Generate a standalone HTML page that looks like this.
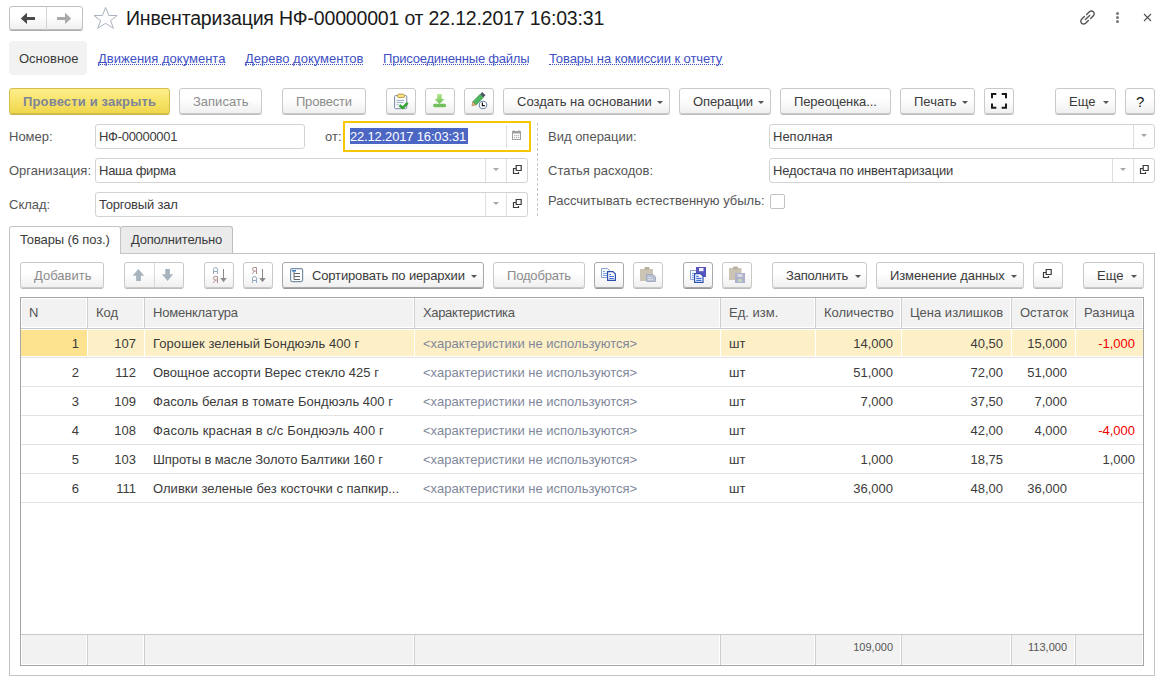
<!DOCTYPE html>
<html><head><meta charset="utf-8"><style>
*{box-sizing:border-box;margin:0;padding:0}
html,body{width:1162px;height:679px;overflow:hidden;background:#fff}
body{position:relative;font-family:"Liberation Sans",sans-serif;font-size:13px;color:#3b3b3b}
div,span,svg{position:absolute}
.t{white-space:nowrap;line-height:15px;height:15px}
.btn{height:26px;border:1px solid #c9c9c9;border-radius:3px;background:linear-gradient(#fff 0%,#fff 40%,#f0f0f0 100%);box-shadow:0 1px 0 #bdbdbd}
.en{border-color:#a9a9a9;box-shadow:0 1px 0 #9a9a9a}
.car{width:0;height:0;border-left:3px solid transparent;border-right:3px solid transparent;border-top:3px solid #555}
.fld{height:25px;border:1px solid #d3d3d3;border-radius:3px;background:#fff}
.dv{width:1px;background:#dedede}
.lnk{color:#3e50c4}
.ul{height:1px;border-top:1px dotted #3e50c4}
.lb{color:#555}
.dis{color:#8c8c8c}
.gr{color:#80879b}
.red{color:#f20000}
.r{text-align:right}
</style></head><body>
<div class="btn" style="left:9px;top:6px;width:74px;height:24px;box-shadow:0 1px 0 #aaa;border-color:#bfbfbf"></div>
<div style="left:46px;top:7px;width:1px;height:23px;background:#d4d4d4"></div>
<svg style="left:0;top:0" width="140" height="40" viewBox="0 0 140 40"><path d="M20.8 18.4 L27 12.8 V17 H35 V20 H27 V23.9 Z" fill="#4a4a4a"/><path d="M71.2 18.4 L65 12.8 V17 H57 V20 H65 V23.9 Z" fill="#a9a9a9"/><path d="M105.6 7.4 L108.8 15.5 L117.2 15.5 L110.6 20.6 L113.4 28.3 L105.6 23.3 L97.8 28.3 L100.6 20.6 L94 15.5 L102.4 15.5 Z" fill="none" stroke="#a9b2be" stroke-width="1" stroke-linejoin="miter"/></svg>
<div class="t" style="left:126px;top:8px;font-size:19.5px;line-height:21px;height:21px;color:#1a1a1a;letter-spacing:-0.18px">Инвентаризация НФ-00000001 от 22.12.2017 16:03:31</div>
<svg style="left:1079px;top:9px" width="17" height="17" viewBox="0 0 17 17"><g fill="none" stroke="#555" stroke-width="1.4" stroke-linecap="round"><path d="M7.6 5.6 L10.4 2.8 A2.8 2.8 0 0 1 14.4 6.8 L11.6 9.6"/><path d="M9.4 11.4 L6.6 14.2 A2.8 2.8 0 0 1 2.6 10.2 L5.4 7.4"/><path d="M6.4 10.6 L10.6 6.4"/></g></svg>
<div style="left:1116px;top:12px;width:3px;height:3px;border-radius:50%;background:#777"></div>
<div style="left:1116px;top:16px;width:3px;height:3px;border-radius:50%;background:#777"></div>
<div style="left:1116px;top:20px;width:3px;height:3px;border-radius:50%;background:#777"></div>
<svg style="left:1143px;top:13px" width="9" height="9" viewBox="0 0 9 9"><path d="M1 1 L8 8 M8 1 L1 8" stroke="#505050" stroke-width="1.1"/></svg>
<div style="left:9px;top:41px;width:78px;height:34px;background:#f2f2f2;border-radius:4px"></div>
<div class="t " style="left:19px;top:51px;">Основное</div>
<div class="t lnk" style="left:98px;top:51px;letter-spacing:0px">Движения документа</div>
<div class="ul" style="left:98px;top:64px;width:127px"></div>
<div class="t lnk" style="left:245px;top:51px;letter-spacing:0px">Дерево документов</div>
<div class="ul" style="left:245px;top:64px;width:118px"></div>
<div class="t lnk" style="left:383px;top:51px;letter-spacing:-0.21px">Присоединенные файлы</div>
<div class="ul" style="left:383px;top:64px;width:145px"></div>
<div class="t lnk" style="left:549px;top:51px;letter-spacing:-0.07px">Товары на комиссии к отчету</div>
<div class="ul" style="left:549px;top:64px;width:174px"></div>
<div class="btn" style="left:9px;top:88px;width:161px;border-color:#d6bf48;background:linear-gradient(#fdee8c,#f7e46a 50%,#efd64e);box-shadow:0 1px 0 #c8b44c"></div>
<div class="t " style="left:23px;top:94px;font-weight:bold;color:#7f839b;letter-spacing:0.15px">Провести и закрыть</div>
<div class="btn " style="left:179px;top:88px;width:83px;"></div>
<div class="t dis" style="left:193px;top:94px;">Записать</div>
<div class="btn " style="left:282px;top:88px;width:84px;"></div>
<div class="t dis" style="left:296px;top:94px;letter-spacing:-0.22px">Провести</div>
<div class="btn " style="left:386px;top:88px;width:30px;"></div>
<div class="btn " style="left:425px;top:88px;width:30px;"></div>
<div class="btn " style="left:464px;top:88px;width:30px;"></div>
<div class="btn " style="left:503px;top:88px;width:167px;"></div>
<div class="t " style="left:517px;top:94px;">Создать на основании</div>
<div class="car" style="left:657px;top:101px;border-top-color:#555"></div>
<div class="btn " style="left:679px;top:88px;width:92px;"></div>
<div class="t " style="left:693px;top:94px;letter-spacing:-0.1px">Операции</div>
<div class="car" style="left:758px;top:101px;border-top-color:#555"></div>
<div class="btn " style="left:780px;top:88px;width:111px;"></div>
<div class="t " style="left:794px;top:94px;letter-spacing:-0.1px">Переоценка...</div>
<div class="btn " style="left:900px;top:88px;width:75px;"></div>
<div class="t " style="left:914px;top:94px;">Печать</div>
<div class="car" style="left:962px;top:101px;border-top-color:#555"></div>
<div class="btn " style="left:984px;top:88px;width:30px;"></div>
<div class="btn " style="left:1055px;top:88px;width:61px;"></div>
<div class="t " style="left:1069px;top:94px;">Еще</div>
<div class="car" style="left:1103px;top:101px;border-top-color:#555"></div>
<div class="btn " style="left:1125px;top:88px;width:30px;"></div>
<div class="t" style="left:1136px;top:93px;font-size:15px;line-height:17px;height:17px;color:#222">?</div>
<svg style="left:391px;top:92px" width="20" height="18" viewBox="0 0 20 18">
<rect x="3.5" y="3.5" width="12.3" height="13.2" rx="1.2" fill="#f3f7fc" stroke="#7d8fa6"/>
<rect x="6.6" y="2.2" width="6.8" height="3.2" rx="1" fill="#f8e88a" stroke="#b98f2e" stroke-width="0.9"/>
<path d="M5.5 8.5 H13 M5.5 10.5 H12.5 M5.5 12.5 H7.5" stroke="#9aabc0" stroke-width="0.9"/>
<path d="M8.4 13.2 L11.9 15.9 L16.6 10.8" fill="none" stroke="#36a536" stroke-width="2.6" stroke-linejoin="round"/>
</svg>
<svg style="left:0;top:0" width="500" height="120" viewBox="0 0 500 120">
<defs><linearGradient id="gd" x1="0" y1="0" x2="0" y2="1"><stop offset="0" stop-color="#b4ea8c"/><stop offset="1" stop-color="#6dbf56"/></linearGradient></defs>
<path d="M437.1 93.9 H441.8 V99.1 H444.5 L439.45 103.9 L434.6 99.1 H437.1 Z" fill="url(#gd)"/>
<rect x="433" y="103.8" width="13.2" height="3.5" rx="1.75" fill="#73bf5d"/>
<path d="M476.1 104.9 L472.8 101.7 L480.15 94.15 L483.45 97.37 Z" fill="#4cb860" stroke="#2f7d3c" stroke-width="0.6"/>
<path d="M480.15 94.15 L483.45 97.37 L485.55 95.2 L482.25 92.0 Z" fill="#4d5864"/>
<path d="M472 105.8 L476.1 104.9 L472.8 101.7 Z" fill="#e9b574" stroke="#8a6a40" stroke-width="0.5"/>
<circle cx="483" cy="105" r="3.8" fill="#fff" stroke="#6a88a6" stroke-width="1.1"/>
<path d="M482.4 102.6 V105.6 H484.9" fill="none" stroke="#111" stroke-width="1.2"/>
</svg>
<svg style="left:990px;top:92px" width="18" height="18" viewBox="0 0 18 18"><g fill="none" stroke="#1a1a1a" stroke-width="2">
<path d="M2 6.3 V2 H6.3"/><path d="M11.7 2 H16 V6.3"/><path d="M2 11.5 V15.8 H6.3"/><path d="M11.7 15.8 H16 V11.5"/></g></svg>
<div class="t lb" style="left:9px;top:129px;">Номер:</div>
<div class="fld" style="left:95px;top:124px;width:210px"></div>
<div class="t " style="left:99px;top:129px;letter-spacing:-0.3px">НФ-00000001</div>
<div class="t lb" style="left:325px;top:129px;">от:</div>
<div style="left:343px;top:121px;width:188px;height:31px;border:2px solid #f6c600;background:#fff"></div>
<div style="left:506px;top:125px;width:1px;height:23px;background:#e0e0e0"></div>
<div style="left:350px;top:128px;width:118px;height:16px;background:#4b66c3"></div>
<div class="t " style="left:350px;top:129px;color:#fff;letter-spacing:-0.17px">22.12.2017 16:03:31</div>
<svg style="left:512px;top:130px" width="9" height="10" viewBox="0 0 9 10"><rect x="0.5" y="1.5" width="8" height="8" fill="none" stroke="#a0a0a0"/><rect x="0.5" y="1.5" width="8" height="2" fill="#a0a0a0"/><path d="M2 0 V2 M7 0 V2" stroke="#a0a0a0"/><g fill="#b0b0b0"><rect x="2" y="5" width="1.2" height="1.2"/><rect x="4" y="5" width="1.2" height="1.2"/><rect x="6" y="5" width="1.2" height="1.2"/><rect x="2" y="7" width="1.2" height="1.2"/><rect x="4" y="7" width="1.2" height="1.2"/><rect x="6" y="7" width="1.2" height="1.2"/></g></svg>
<div class="t lb" style="left:9px;top:163px;">Организация:</div>
<div class="fld" style="left:95px;top:158px;width:433px"></div>
<div class="t " style="left:99px;top:163px;letter-spacing:-0.25px">Наша фирма</div>
<div class="dv" style="left:506px;top:159px;height:23px"></div>
<svg style="left:511px;top:164px" width="12" height="12" viewBox="0 0 12 12"><path d="M5.2 1.5 H10.2 V6.5 H5.2 Z M5 4.5 H2.5 V9.5 H7.5 V8" fill="none" stroke="#3a3a3a" stroke-width="1.2"/></svg>
<div class="dv" style="left:485px;top:159px;height:23px"></div>
<div class="car" style="left:493px;top:168px;border-top-color:#a8a8a8;border-left-width:3px;border-right-width:3px;border-top-width:3px"></div>
<div class="t lb" style="left:9px;top:197px;">Склад:</div>
<div class="fld" style="left:95px;top:192px;width:433px"></div>
<div class="t " style="left:99px;top:197px;letter-spacing:-0.2px">Торговый зал</div>
<div class="dv" style="left:506px;top:193px;height:23px"></div>
<svg style="left:511px;top:198px" width="12" height="12" viewBox="0 0 12 12"><path d="M5.2 1.5 H10.2 V6.5 H5.2 Z M5 4.5 H2.5 V9.5 H7.5 V8" fill="none" stroke="#3a3a3a" stroke-width="1.2"/></svg>
<div class="dv" style="left:485px;top:193px;height:23px"></div>
<div class="car" style="left:493px;top:202px;border-top-color:#a8a8a8;border-left-width:3px;border-right-width:3px;border-top-width:3px"></div>
<div style="left:537px;top:123px;width:1px;height:95px;background:repeating-linear-gradient(#c9c9c9 0 3px,transparent 3px 5px)"></div>
<div class="t lb" style="left:548px;top:129px;">Вид операции:</div>
<div class="fld" style="left:769px;top:124px;width:386px"></div>
<div class="t " style="left:773px;top:129px;">Неполная</div>
<div class="dv" style="left:1133px;top:125px;height:23px"></div>
<div class="car" style="left:1141px;top:134px;border-top-color:#a8a8a8;border-left-width:3px;border-right-width:3px;border-top-width:3px"></div>
<div class="t lb" style="left:548px;top:163px;">Статья расходов:</div>
<div class="fld" style="left:769px;top:158px;width:386px"></div>
<div class="t " style="left:773px;top:163px;letter-spacing:-0.15px">Недостача по инвентаризации</div>
<div class="dv" style="left:1133px;top:159px;height:23px"></div>
<svg style="left:1138px;top:164px" width="12" height="12" viewBox="0 0 12 12"><path d="M5.2 1.5 H10.2 V6.5 H5.2 Z M5 4.5 H2.5 V9.5 H7.5 V8" fill="none" stroke="#3a3a3a" stroke-width="1.2"/></svg>
<div class="dv" style="left:1112px;top:159px;height:23px"></div>
<div class="car" style="left:1120px;top:168px;border-top-color:#a8a8a8;border-left-width:3px;border-right-width:3px;border-top-width:3px"></div>
<div class="t lb" style="left:548px;top:193px;">Рассчитывать естественную убыль:</div>
<div style="left:770px;top:194px;width:15px;height:15px;border:1px solid #c3c3c3;border-radius:2px;background:#fff"></div>
<div style="left:9px;top:253px;width:1146px;height:423px;border:1px solid #c4c4c4"></div>
<div style="left:120px;top:226px;width:113px;height:27px;border:1px solid #bdbdbd;border-bottom:none;border-radius:3px 3px 0 0;background:#ebebeb"></div>
<div style="left:9px;top:226px;width:112px;height:28px;border:1px solid #c4c4c4;border-bottom:none;border-radius:3px 3px 0 0;background:#fff"></div>
<div class="t " style="left:20px;top:232px;letter-spacing:-0.12px">Товары (6 поз.)</div>
<div class="t " style="left:131px;top:232px;letter-spacing:-0.2px">Дополнительно</div>
<div class="btn " style="left:20px;top:262px;width:84px;"></div>
<div class="t dis" style="left:34px;top:268px;">Добавить</div>
<div class="btn " style="left:124px;top:262px;width:60px;"></div>
<div style="left:154px;top:263px;width:1px;height:24px;background:#d9d9d9"></div>
<div class="btn " style="left:204px;top:262px;width:30px;"></div>
<div class="btn " style="left:243px;top:262px;width:30px;"></div>
<svg style="left:0;top:0" width="300" height="300" viewBox="0 0 300 300"><path d="M138.4 269 L144.2 275.8 H140.9 V281 H136.1 V275.8 H132.6 Z" fill="#a8b4bd"/><path d="M167.6 281 L173.2 274.2 H169.9 V269 H165.3 V274.2 H162 Z" fill="#a8b4bd"/><g fill="none" stroke-width="1"><path d="M213.5 274 V269.2 Q213.5 267.5 215.5 267.5 Q217.5 267.5 217.5 269.2 V274 M213.5 271.5 H217.5" stroke="#97abc0"/><path d="M217.5 283 V276.5 H215.2 Q213.5 276.5 213.5 278.3 Q213.5 280 215.2 280 H217.5 M215.6 280 L213.2 282.8" stroke="#b08f8f"/><path d="M223.5 269 V279" stroke="#8a8a8a"/><path d="M252.5 283 V278.2 Q252.5 276.5 254.5 276.5 Q256.5 276.5 256.5 278.2 V283 M252.5 280.5 H256.5" stroke="#97abc0"/><path d="M256.5 274 V267.5 H254.2 Q252.5 267.5 252.5 269.3 Q252.5 271 254.2 271 H256.5 M254.6 271 L252.2 273.8" stroke="#b08f8f"/><path d="M262.5 269 V279" stroke="#8a8a8a"/></g><path d="M220.3 278 H226.7 L223.5 282.2 Z" fill="#8a8a8a"/><path d="M259.3 278 H265.7 L262.5 282.2 Z" fill="#8a8a8a"/></svg>
<div class="btn en" style="left:282px;top:262px;width:202px;"></div>
<svg style="left:290px;top:268px" width="14" height="15" viewBox="0 0 14 15"><rect x="0.6" y="0.6" width="12" height="13" rx="1.5" fill="#fff" stroke="#7890a6" stroke-width="1.2"/><rect x="2" y="2" width="4" height="1.6" fill="#3a86cf"/><path d="M4 3.5 V11.5 M4 5.5 H10 M4 8.5 H10 M4 11.5 H10" stroke="#666" stroke-width="1"/></svg>
<div class="t " style="left:312px;top:268px;letter-spacing:-0.15px">Сортировать по иерархии</div>
<div class="car" style="left:471px;top:275px;border-top-color:#555"></div>
<div class="btn " style="left:493px;top:262px;width:92px;"></div>
<div class="t dis" style="left:507px;top:268px;letter-spacing:-0.17px">Подобрать</div>
<div class="btn en" style="left:594px;top:262px;width:30px;"></div>
<div class="btn " style="left:633px;top:262px;width:30px;"></div>
<div class="btn en" style="left:683px;top:262px;width:30px;"></div>
<div class="btn " style="left:722px;top:262px;width:30px;"></div>
<svg style="left:0;top:0" width="760" height="300" viewBox="0 0 760 300">
<path d="M601.5 268.5 H607.5 L609.5 270.5 V277.5 H601.5 Z" fill="#f4f7fc" stroke="#8ca2c8"/>
<path d="M603 271.5 H605 M603 273.5 H607 M603 275.5 H607" stroke="#7aa2e2"/>
<path d="M607.6 271.6 H613 L615.4 274 V280.4 H607.6 Z" fill="#fff" stroke="#2d4fae" stroke-width="1.2"/>
<path d="M609.2 274.5 H611 M609.2 276.5 H614 M609.2 278.5 H614" stroke="#3f72d6" stroke-width="1.1"/>
<rect x="640" y="269" width="13" height="12" fill="#cbc3b3"/>
<rect x="644.5" y="267" width="5" height="3" rx="1" fill="#b9b1a1"/>
<path d="M646.5 274.5 H653 L655.5 277 V281.5 H646.5 Z" fill="#b9c2d2" stroke="#a3abbd"/>
<path d="M648 277.5 H651.5 M648 279.5 H653" stroke="#d8dde7"/>
<path d="M690.5 270.5 H697 L699.5 273 V279.5 H690.5 Z" fill="#f4f7fc" stroke="#8ca2c8"/>
<path d="M692 273.5 H696 M692 275.5 H696 M692 277.5 H696" stroke="#7aa2e2"/>
<rect x="696" y="267" width="10" height="10" fill="#5754bd"/>
<rect x="699" y="268" width="4.5" height="3.2" fill="#f0f0ff"/>
<path d="M694.6 273.6 H700.5 L703 276 V282.4 H694.6 Z" fill="#fff" stroke="#2d4fae" stroke-width="1.2"/>
<path d="M696.2 276.4 H698.5 M696.2 278.4 H701.5 M696.2 280.4 H701.5" stroke="#3f72d6" stroke-width="1.1"/>
<rect x="729" y="268" width="12.5" height="12" fill="#cbc3b3"/>
<rect x="733" y="266.5" width="5" height="3" rx="1" fill="#b9b1a1"/>
<rect x="735" y="273" width="10" height="10" fill="#aeb2ca"/>
<rect x="737.5" y="274" width="5" height="3" fill="#d6d9e8"/>
<rect x="738" y="279" width="4" height="3" fill="#c5d6bf"/>
</svg>
<div class="btn " style="left:772px;top:262px;width:95px;"></div>
<div class="t " style="left:786px;top:268px;letter-spacing:-0.2px">Заполнить</div>
<div class="car" style="left:855px;top:275px;border-top-color:#555"></div>
<div class="btn " style="left:876px;top:262px;width:148px;"></div>
<div class="t " style="left:890px;top:268px;letter-spacing:-0.09px">Изменение данных</div>
<div class="car" style="left:1011px;top:275px;border-top-color:#555"></div>
<div class="btn " style="left:1033px;top:262px;width:30px;"></div>
<svg style="left:1041px;top:268px" width="12" height="12" viewBox="0 0 12 12"><path d="M5.2 1.5 H10.2 V6.5 H5.2 Z M5 4.5 H2.5 V9.5 H7.5 V8" fill="none" stroke="#3a3a3a" stroke-width="1.2"/></svg>
<div class="btn " style="left:1083px;top:262px;width:61px;"></div>
<div class="t " style="left:1097px;top:268px;">Еще</div>
<div class="car" style="left:1131px;top:275px;border-top-color:#555"></div>
<div style="left:20px;top:297px;width:1124px;height:369px;border:1px solid #a6a6a6;background:#fff"></div>
<div style="left:21px;top:298px;width:1122px;height:30px;background:#fff"></div>
<div style="left:22px;top:299px;width:64px;height:28px;background:#f2f2f2"></div>
<div style="left:88px;top:299px;width:55px;height:28px;background:#f2f2f2"></div>
<div style="left:87px;top:298px;width:1px;height:30px;background:#cfcfcf"></div>
<div style="left:145px;top:299px;width:268px;height:28px;background:#f2f2f2"></div>
<div style="left:144px;top:298px;width:1px;height:30px;background:#cfcfcf"></div>
<div style="left:415px;top:299px;width:304px;height:28px;background:#f2f2f2"></div>
<div style="left:414px;top:298px;width:1px;height:30px;background:#cfcfcf"></div>
<div style="left:721px;top:299px;width:93px;height:28px;background:#f2f2f2"></div>
<div style="left:720px;top:298px;width:1px;height:30px;background:#cfcfcf"></div>
<div style="left:816px;top:299px;width:84px;height:28px;background:#f2f2f2"></div>
<div style="left:815px;top:298px;width:1px;height:30px;background:#cfcfcf"></div>
<div style="left:902px;top:299px;width:108px;height:28px;background:#f2f2f2"></div>
<div style="left:901px;top:298px;width:1px;height:30px;background:#cfcfcf"></div>
<div style="left:1012px;top:299px;width:62px;height:28px;background:#f2f2f2"></div>
<div style="left:1011px;top:298px;width:1px;height:30px;background:#cfcfcf"></div>
<div style="left:1076px;top:299px;width:66px;height:28px;background:#f2f2f2"></div>
<div style="left:1075px;top:298px;width:1px;height:30px;background:#cfcfcf"></div>
<div style="left:21px;top:328px;width:1122px;height:1px;background:#c9c9c9"></div>
<div class="t lb" style="left:29px;top:305px;letter-spacing:0px">N</div>
<div class="t lb" style="left:96px;top:305px;letter-spacing:0px">Код</div>
<div class="t lb" style="left:153px;top:305px;letter-spacing:-0.2px">Номенклатура</div>
<div class="t lb" style="left:423px;top:305px;letter-spacing:-0.36px">Характеристика</div>
<div class="t lb" style="left:729px;top:305px;letter-spacing:0px">Ед. изм.</div>
<div class="t lb" style="left:824px;top:305px;letter-spacing:0px">Количество</div>
<div class="t lb" style="left:910px;top:305px;letter-spacing:0px">Цена излишков</div>
<div class="t lb" style="left:1020px;top:305px;letter-spacing:0px">Остаток</div>
<div class="t lb" style="left:1084px;top:305px;letter-spacing:0px">Разница</div>
<div style="left:21px;top:330px;width:1122px;height:26px;background:#fef0c6"></div>
<div style="left:21px;top:330px;width:66px;height:26px;background:#fde290"></div>
<div style="left:87px;top:330px;width:1px;height:26px;background:#fff"></div>
<div style="left:144px;top:330px;width:1px;height:26px;background:#fff"></div>
<div style="left:414px;top:330px;width:1px;height:26px;background:#fff"></div>
<div style="left:720px;top:330px;width:1px;height:26px;background:#fff"></div>
<div style="left:815px;top:330px;width:1px;height:26px;background:#fff"></div>
<div style="left:901px;top:330px;width:1px;height:26px;background:#fff"></div>
<div style="left:1011px;top:330px;width:1px;height:26px;background:#fff"></div>
<div style="left:1075px;top:330px;width:1px;height:26px;background:#fff"></div>
<div style="left:21px;top:357px;width:1122px;height:1px;background:#e3e3e3"></div>
<div class="t r " style="left:-221px;width:300px;top:336px;font-size:13px;">1</div>
<div class="t r " style="left:-164px;width:300px;top:336px;font-size:13px;">107</div>
<div class="t " style="left:153px;top:336px;letter-spacing:0.07px">Горошек зеленый Бондюэль 400 г</div>
<div class="t gr" style="left:423px;top:336px;">&lt;характеристики не используются&gt;</div>
<div class="t " style="left:729px;top:336px;">шт</div>
<div class="t r " style="left:593px;width:300px;top:336px;font-size:13px;">14,000</div>
<div class="t r " style="left:703px;width:300px;top:336px;font-size:13px;">40,50</div>
<div class="t r " style="left:767px;width:300px;top:336px;font-size:13px;">15,000</div>
<div class="t r red" style="left:835px;width:300px;top:336px;font-size:13px;">-1,000</div>
<div style="left:21px;top:386px;width:1122px;height:1px;background:#e3e3e3"></div>
<div class="t r " style="left:-221px;width:300px;top:365px;font-size:13px;">2</div>
<div class="t r " style="left:-164px;width:300px;top:365px;font-size:13px;">112</div>
<div class="t " style="left:153px;top:365px;letter-spacing:0px">Овощное ассорти Верес стекло 425 г</div>
<div class="t gr" style="left:423px;top:365px;">&lt;характеристики не используются&gt;</div>
<div class="t " style="left:729px;top:365px;">шт</div>
<div class="t r " style="left:593px;width:300px;top:365px;font-size:13px;">51,000</div>
<div class="t r " style="left:703px;width:300px;top:365px;font-size:13px;">72,00</div>
<div class="t r " style="left:767px;width:300px;top:365px;font-size:13px;">51,000</div>
<div style="left:21px;top:415px;width:1122px;height:1px;background:#e3e3e3"></div>
<div class="t r " style="left:-221px;width:300px;top:394px;font-size:13px;">3</div>
<div class="t r " style="left:-164px;width:300px;top:394px;font-size:13px;">109</div>
<div class="t " style="left:153px;top:394px;letter-spacing:0.03px">Фасоль белая в томате Бондюэль 400 г</div>
<div class="t gr" style="left:423px;top:394px;">&lt;характеристики не используются&gt;</div>
<div class="t " style="left:729px;top:394px;">шт</div>
<div class="t r " style="left:593px;width:300px;top:394px;font-size:13px;">7,000</div>
<div class="t r " style="left:703px;width:300px;top:394px;font-size:13px;">37,50</div>
<div class="t r " style="left:767px;width:300px;top:394px;font-size:13px;">7,000</div>
<div style="left:21px;top:444px;width:1122px;height:1px;background:#e3e3e3"></div>
<div class="t r " style="left:-221px;width:300px;top:423px;font-size:13px;">4</div>
<div class="t r " style="left:-164px;width:300px;top:423px;font-size:13px;">108</div>
<div class="t " style="left:153px;top:423px;letter-spacing:0.15px">Фасоль красная в с/с Бондюэль 400 г</div>
<div class="t gr" style="left:423px;top:423px;">&lt;характеристики не используются&gt;</div>
<div class="t " style="left:729px;top:423px;">шт</div>
<div class="t r " style="left:703px;width:300px;top:423px;font-size:13px;">42,00</div>
<div class="t r " style="left:767px;width:300px;top:423px;font-size:13px;">4,000</div>
<div class="t r red" style="left:835px;width:300px;top:423px;font-size:13px;">-4,000</div>
<div style="left:21px;top:473px;width:1122px;height:1px;background:#e3e3e3"></div>
<div class="t r " style="left:-221px;width:300px;top:452px;font-size:13px;">5</div>
<div class="t r " style="left:-164px;width:300px;top:452px;font-size:13px;">103</div>
<div class="t " style="left:153px;top:452px;letter-spacing:-0.09px">Шпроты в масле Золото Балтики 160 г</div>
<div class="t gr" style="left:423px;top:452px;">&lt;характеристики не используются&gt;</div>
<div class="t " style="left:729px;top:452px;">шт</div>
<div class="t r " style="left:593px;width:300px;top:452px;font-size:13px;">1,000</div>
<div class="t r " style="left:703px;width:300px;top:452px;font-size:13px;">18,75</div>
<div class="t r " style="left:835px;width:300px;top:452px;font-size:13px;">1,000</div>
<div style="left:21px;top:502px;width:1122px;height:1px;background:#e3e3e3"></div>
<div class="t r " style="left:-221px;width:300px;top:481px;font-size:13px;">6</div>
<div class="t r " style="left:-164px;width:300px;top:481px;font-size:13px;">111</div>
<div class="t " style="left:153px;top:481px;letter-spacing:0.03px">Оливки зеленые без косточки с папкир...</div>
<div class="t gr" style="left:423px;top:481px;">&lt;характеристики не используются&gt;</div>
<div class="t " style="left:729px;top:481px;">шт</div>
<div class="t r " style="left:593px;width:300px;top:481px;font-size:13px;">36,000</div>
<div class="t r " style="left:703px;width:300px;top:481px;font-size:13px;">48,00</div>
<div class="t r " style="left:767px;width:300px;top:481px;font-size:13px;">36,000</div>
<div style="left:21px;top:634px;width:1122px;height:1px;background:#c9c9c9"></div>
<div style="left:22px;top:635px;width:64px;height:29px;background:#f2f2f2"></div>
<div style="left:88px;top:635px;width:55px;height:29px;background:#f2f2f2"></div>
<div style="left:87px;top:635px;width:1px;height:30px;background:#cfcfcf"></div>
<div style="left:145px;top:635px;width:268px;height:29px;background:#f2f2f2"></div>
<div style="left:144px;top:635px;width:1px;height:30px;background:#cfcfcf"></div>
<div style="left:415px;top:635px;width:304px;height:29px;background:#f2f2f2"></div>
<div style="left:414px;top:635px;width:1px;height:30px;background:#cfcfcf"></div>
<div style="left:721px;top:635px;width:93px;height:29px;background:#f2f2f2"></div>
<div style="left:720px;top:635px;width:1px;height:30px;background:#cfcfcf"></div>
<div style="left:816px;top:635px;width:84px;height:29px;background:#f2f2f2"></div>
<div style="left:815px;top:635px;width:1px;height:30px;background:#cfcfcf"></div>
<div style="left:902px;top:635px;width:108px;height:29px;background:#f2f2f2"></div>
<div style="left:901px;top:635px;width:1px;height:30px;background:#cfcfcf"></div>
<div style="left:1012px;top:635px;width:62px;height:29px;background:#f2f2f2"></div>
<div style="left:1011px;top:635px;width:1px;height:30px;background:#cfcfcf"></div>
<div style="left:1076px;top:635px;width:66px;height:29px;background:#f2f2f2"></div>
<div style="left:1075px;top:635px;width:1px;height:30px;background:#cfcfcf"></div>
<div class="t r lb" style="left:593px;width:300px;top:640px;font-size:11px;">109,000</div>
<div class="t r lb" style="left:767px;width:300px;top:640px;font-size:11px;">113,000</div>
</body></html>
